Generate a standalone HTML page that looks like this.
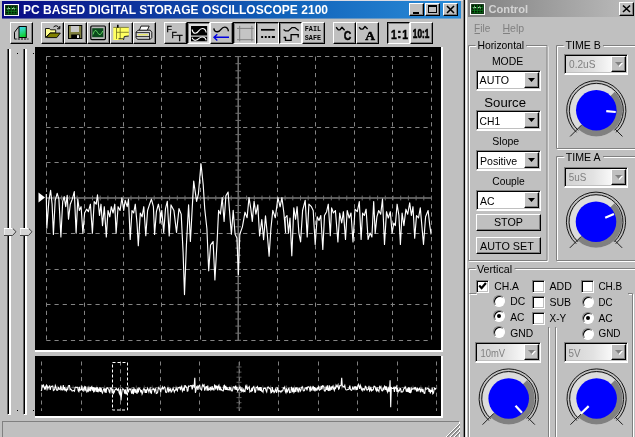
<!DOCTYPE html><html><head><meta charset="utf-8"><title>PC BASED DIGITAL STORAGE OSCILLOSCOPE 2100</title><style>
*{box-sizing:border-box;margin:0;padding:0}
html,body{width:635px;height:437px;overflow:hidden;background:#c0c0c0}
body{position:relative;font-family:"Liberation Sans",sans-serif;font-size:11px;color:#000}
.a{position:absolute}
.t{position:absolute;white-space:nowrap;line-height:1;will-change:transform}
svg{will-change:transform}
.btn{position:absolute;background:#c0c0c0;border:1px solid;border-color:#fff #000 #000 #fff;box-shadow:inset -1px -1px 0 #808080}
.btn.dn{border-color:#000 #fff #fff #000;box-shadow:inset 1px 1px 0 #808080;background:#d8d8d8}
.tb{width:23px;height:23px;top:22px}
.tb svg{position:absolute;left:0;top:0}
.sunk{position:absolute;border:1px solid;border-width:1px 1px 2px 1px;border-color:#808080 #fff #fff #808080;box-shadow:inset 1px 1px 0 #000, inset -1px -1px 0 #c0c0c0;background:#fff}
.grp{position:absolute;border:1px solid #808080;box-shadow:1px 1px 0 #fff, inset 1px 1px 0 #fff}
.lbl{position:absolute;background:#c0c0c0;white-space:nowrap;line-height:1;padding:0 2px}
.cb{position:absolute;width:13px;height:13px;border:1px solid;border-color:#808080 #fff #fff #808080;box-shadow:inset 1px 1px 0 #000, inset -1px -1px 0 #c0c0c0;background:#fff}
.rd{position:absolute;width:12px;height:12px;border-radius:50%;background:#fff;border:1px solid;border-color:#808080 #fff #fff #808080;box-shadow:inset 1px 1px 0 #000}
.rd.on:after{content:"";position:absolute;left:3px;top:3px;width:4px;height:4px;border-radius:50%;background:#000}
.dd{position:absolute;right:1px;top:1px;bottom:1px;width:15px;background:#c0c0c0;border:1px solid;border-color:#fff #000 #000 #fff;box-shadow:inset -1px -1px 0 #808080}
.dd:after{content:"";position:absolute;left:3px;top:5px;width:7px;height:4px;background:#000;clip-path:polygon(0 0,100% 0,50% 100%)}
.dis .dd:after{background:#808080}
.dis{color:#808080;background:linear-gradient(to right,#d2d2d2 0%,#e2e2e2 45%,#fcfcfc 80%) !important}
.dis .dd:before{content:"";position:absolute;left:4px;top:6px;width:7px;height:4px;background:#fff;clip-path:polygon(0 0,100% 0,50% 100%)}
.ct{position:absolute;left:4px;top:4px;line-height:1;white-space:nowrap}
</style></head><body>
<div class="a" style="left:0;top:0;width:465px;height:1px;background:#dcdce4"></div>
<div class="a" style="left:2px;top:1px;width:459px;height:17px;background:linear-gradient(to right,#0a0a84 0%,#1060b8 60%,#2a8cd8 100%)"></div>
<div class="a" style="left:2px;top:18px;width:459px;height:1px;opacity:.55;background:linear-gradient(to right,#0a0a84 0%,#1060b8 60%,#2a8cd8 100%)"></div>
<svg class="a" style="left:4px;top:4px" width="15" height="12.200" viewBox="0 0 16 13" preserveAspectRatio="none"><rect x="0.600" y="0.600" width="14.800" height="11.800" fill="#000" stroke="#fff" stroke-width="1.200"/><rect x="1.800" y="1.800" width="12.400" height="9.400" fill="#0c7a1c"/><rect x="2.2" y="2.2" width="2.100" height="2" fill="#001800"/><rect x="5.2" y="2.2" width="2.100" height="2" fill="#001800"/><rect x="8.2" y="2.2" width="2.100" height="2" fill="#001800"/><rect x="11.2" y="2.2" width="2.100" height="2" fill="#001800"/><rect x="2.2" y="5.2" width="2.100" height="2" fill="#001800"/><rect x="5.2" y="5.2" width="2.100" height="2" fill="#001800"/><rect x="8.2" y="5.2" width="2.100" height="2" fill="#001800"/><rect x="11.2" y="5.2" width="2.100" height="2" fill="#001800"/><rect x="2.2" y="8.2" width="2.100" height="2" fill="#001800"/><rect x="5.2" y="8.2" width="2.100" height="2" fill="#001800"/><rect x="8.2" y="8.2" width="2.100" height="2" fill="#001800"/><rect x="11.2" y="8.2" width="2.100" height="2" fill="#001800"/><path d="M3.500 5.500q1.500 -2.500 3 0M8.500 5.500q1.500 -2.500 3 0" stroke="#e8ffe8" stroke-width="1" fill="none"/></svg>
<div class="t" style="left:23px;top:4px;font-weight:bold;font-size:12px;color:#fff;letter-spacing:0.04px">PC BASED DIGITAL STORAGE OSCILLOSCOPE 2100</div>
<div class="btn" style="left:409px;top:3px;width:15px;height:13px"><div class="a" style="left:3px;top:8px;width:6px;height:2px;background:#000"></div></div>
<div class="btn" style="left:425px;top:3px;width:15px;height:13px"><div class="a" style="left:2px;top:1px;width:9px;height:8px;border:1px solid #000;border-top-width:2px"></div></div>
<div class="btn" style="left:443px;top:3px;width:15px;height:13px"><svg class="a" style="left:0;top:0" width="13" height="11"><path d="M3 2l7 7M10 2l-7 7" stroke="#000" stroke-width="1.6"/></svg></div>
<div class="a" style="left:463px;top:0;width:1px;height:437px;background:#808080"></div>
<div class="a" style="left:464px;top:0;width:1px;height:437px;background:#000"></div>
<div class="btn" style="left:10px;top:22px;width:23px;height:22px"></div>
<div class="btn" style="left:41px;top:22px;width:23px;height:22px"></div>
<div class="btn" style="left:64px;top:22px;width:23px;height:22px"></div>
<div class="btn" style="left:87px;top:22px;width:23px;height:22px"></div>
<div class="btn" style="left:110px;top:22px;width:23px;height:22px"></div>
<div class="btn" style="left:133px;top:22px;width:23px;height:22px"></div>
<div class="btn" style="left:164px;top:22px;width:23px;height:22px"></div>
<div class="btn dn" style="left:187px;top:22px;width:23px;height:22px;background:#dedede"></div>
<div class="btn" style="left:210px;top:22px;width:23px;height:22px"></div>
<div class="btn dn" style="left:233px;top:22px;width:23px;height:22px;background:#c4c4c4"></div>
<div class="btn dn" style="left:256px;top:22px;width:23px;height:22px;background:#c4c4c4"></div>
<div class="btn dn" style="left:279px;top:22px;width:23px;height:22px;background:#c4c4c4"></div>
<div class="btn" style="left:302px;top:22px;width:23px;height:22px"></div>
<div class="btn" style="left:333px;top:22px;width:23px;height:22px"></div>
<div class="btn" style="left:356px;top:22px;width:23px;height:22px"></div>
<div class="btn dn" style="left:387px;top:22px;width:23px;height:22px;background:#cccccc"></div>
<div class="btn" style="left:410px;top:22px;width:23px;height:22px"></div>
<svg class="a" style="left:0;top:20px" width="465" height="27" viewBox="0 20 465 27" font-family="Liberation Sans,sans-serif"><defs><linearGradient id="g1" x1="0" y1="0" x2="0.3" y2="1"><stop offset="0" stop-color="#40d0ff"/><stop offset=".4" stop-color="#30d8b0"/><stop offset="1" stop-color="#10d030"/></linearGradient></defs><rect x="19" y="26.500" width="7.300" height="11" fill="url(#g1)" stroke="#000" stroke-width="1"/><path d="M18.500 27L14.500 32.200V38.800" fill="none" stroke="#000" stroke-width="1"/><path d="M14.500 39H28.500" stroke="#000" stroke-width="1" stroke-dasharray="2.200 1"/><path d="M45.500 37.500V28.500H49.500L50.500 29.800H55.700V33H50Z" fill="#ffff90" stroke="#000" stroke-width=".9"/><path d="M46.300 37.600L49.900 33.100H60.300L56.800 37.600Z" fill="#808000" stroke="#000" stroke-width=".9"/><path d="M53.500 27Q56.500 24.200 59.300 28" fill="none" stroke="#000" stroke-width="1"/><path d="M59.800 26v2.800h-2.800" fill="none" stroke="#000" stroke-width="1"/><rect x="68.500" y="25.500" width="13.300" height="13" fill="#808040" stroke="#000" stroke-width="1"/><rect x="70.800" y="26" width="8.200" height="6" fill="#c8c8c8"/><rect x="71.200" y="34.500" width="8.600" height="4" fill="#000"/><rect x="77" y="35.200" width="2" height="2.800" fill="#e8e8e8"/><rect x="90.800" y="26" width="14.600" height="13.600" rx="1" fill="#b8b8b8" stroke="#000" stroke-width="1.200"/><rect x="92.200" y="28.200" width="11.200" height="9" fill="#0a4a1c"/><path d="M93 34.500Q95 27.500 97.500 32.500T102.800 31" fill="none" stroke="#60d060" stroke-width="1"/><path d="M113.300 27.400H128.800V36L124.300 36.500L123.500 40H113.300Z" fill="#ffff60"/><path d="M116.500 27.500V39M120.200 28V39M116.500 32.300H128.800M113.300 27.400H128.800" stroke="#707020" stroke-width=".8" fill="none"/><path d="M123.500 40L124.300 36.500L128.800 36" stroke="#202020" stroke-width="1" fill="none"/><path d="M117.800 24.800v3" stroke="#000" stroke-width="1.600"/><path d="M118.500 38.800h5" stroke="#303030" stroke-width="1"/><path d="M141 26.100H149.200L147.200 30.600H139.300Z" fill="#fff" stroke="#000" stroke-width=".9"/><path d="M138 30.200H150.200L151.800 32.200V37.500L150.300 39.300H137.500L136.100 37.500V32.200Z" fill="#d8d8d8" stroke="#000" stroke-width=".9"/><path d="M136.100 32.600H149.500M136.100 36.600H149.500M149.500 32.600V39" stroke="#000" stroke-width=".8" fill="none"/><path d="M138 34.700H148" stroke="#e8e860" stroke-width="1.300"/><g stroke="#000" stroke-width=".3" font-size="9.400"><text x="166.400" y="31.800" textLength="5.400" lengthAdjust="spacingAndGlyphs">F</text><text x="171.500" y="37.800" textLength="5.400" lengthAdjust="spacingAndGlyphs">F</text><text x="176.400" y="40.900" textLength="6.200" lengthAdjust="spacingAndGlyphs">T</text></g><rect x="191" y="26" width="16.200" height="15.300" fill="#000"/><path d="M192 29.500Q193 33.500 195.300 33.200C199 33 198.500 28.500 202.400 28.500Q205.500 28.500 206.200 32.500" fill="none" stroke="#fff" stroke-width="1.100"/><path d="M191 36.100H207.200" stroke="#fff" stroke-width="1"/><path d="M192 37.700Q193.300 40.600 195.500 40.300C199 40 198.500 37 202.400 37Q205.300 37 206.200 40.300" fill="none" stroke="#fff" stroke-width="1.100"/><path d="M213.800 28.300Q214.300 31.800 217.300 31.800C221.500 31.800 220.500 27.100 224.600 27.100Q228 27.100 228.400 31.300" fill="none" stroke="#000" stroke-width="1.400"/><path d="M214 37.300H229M217.300 34.200L214 37.300L217.300 40.400" fill="none" stroke="#0000e0" stroke-width="1.400"/><path d="M237 28.400H253.600M237 39.700H253.600M239.700 25.800V41.400M251.900 25.800V41.400" stroke="#808080" stroke-width="1" fill="none"/><path d="M261 29.800H274.800" stroke="#000" stroke-width="1.700"/><path d="M261.200 37H263.100M264.800 37H266.700M268.300 37H270.200M271.800 37H274.900" stroke="#000" stroke-width="1.900"/><path d="M283.600 29.500L285.500 30.900H288.300L292 27.600H294.900L298.700 30.400" fill="none" stroke="#000" stroke-width="1.300"/><path d="M283.600 37.500H285.500V40.300H291.100V34.700H298.200V37.500" fill="none" stroke="#000" stroke-width="1.300"/><text x="304.800" y="31" font-size="7.200" font-weight="bold" font-family="Liberation Mono,monospace" textLength="16.200" lengthAdjust="spacingAndGlyphs">FAIL</text><text x="304.800" y="40" font-size="7.200" font-weight="bold" font-family="Liberation Mono,monospace" textLength="16.200" lengthAdjust="spacingAndGlyphs">SAFE</text><path d="M336.100 27.300L338.300 29.900H339.900L342 27.300L344.600 30.200" fill="none" stroke="#000" stroke-width="1.400" stroke-linejoin="round"/><text x="343.700" y="40.400" font-size="12.800" font-weight="bold" stroke="#000" stroke-width=".5" textLength="7.500" lengthAdjust="spacingAndGlyphs">C</text><path d="M359.100 27.300L360.800 29.100H362.900L365 26.500L367.600 29.100" fill="none" stroke="#000" stroke-width="1.400" stroke-linejoin="round"/><text x="365.200" y="39.700" font-size="13.500" font-weight="bold" font-family="Liberation Serif,serif" stroke="#000" stroke-width=".5">A</text><g font-size="13.500" font-weight="bold" stroke="#000" stroke-width=".5"><text x="391" y="38.900" textLength="5.800" lengthAdjust="spacingAndGlyphs">1</text><text x="397" y="38.300">:</text><text x="402.200" y="38.900" textLength="5.800" lengthAdjust="spacingAndGlyphs">1</text></g><text x="412.800" y="38.100" font-size="13.500" font-weight="bold" textLength="16.500" lengthAdjust="spacingAndGlyphs" stroke="#000" stroke-width=".7">10:1</text></svg>
<div class="a" style="left:7px;top:49px;width:4px;height:366px;border-left:1px solid #606060;border-right:2px solid #fff;border-bottom:1px solid #fff;background:#000"></div>
<div class="a" style="left:23px;top:49px;width:4px;height:366px;border-left:1px solid #606060;border-right:2px solid #fff;border-bottom:1px solid #fff;background:#000"></div>
<div class="a" style="left:17px;top:53px;width:1px;height:1px;background:#000"></div><div class="a" style="left:17px;top:410px;width:1px;height:1px;background:#000"></div>
<div class="a" style="left:33px;top:53px;width:1px;height:1px;background:#000"></div><div class="a" style="left:33px;top:410px;width:1px;height:1px;background:#000"></div>
<svg class="a" style="left:4px;top:228px" width="13" height="9" viewBox="0 0 13 9"><path d="M0 0h8.500l3.500 3.800l-3.500 4.200h-8.500z" fill="#d4d4d4"/><path d="M0 7.500V.5h8.500" stroke="#fff" fill="none"/><path d="M0 7.500h8.500l3.500-3.800l-3.200-3.200" stroke="#404040" fill="none"/></svg>
<svg class="a" style="left:20px;top:228px" width="13" height="9" viewBox="0 0 13 9"><path d="M0 0h8.500l3.500 3.800l-3.500 4.200h-8.500z" fill="#d4d4d4"/><path d="M0 7.500V.5h8.500" stroke="#fff" fill="none"/><path d="M0 7.500h8.500l3.500-3.800l-3.200-3.200" stroke="#404040" fill="none"/></svg>
<div class="a" style="left:35px;top:47px;width:408px;height:305px;background:#fff"></div>
<div class="a" style="left:35px;top:356px;width:408px;height:62px;background:#fff"></div>
<svg class="a" style="left:0;top:0" width="465" height="437" viewBox="0 0 465 437"><rect x="35" y="47" width="406" height="303" fill="#000"/><rect x="35" y="356" width="406" height="60" fill="#000"/><path d="M46.5 56.6V340.3M84.5 56.6V340.3M123.5 56.6V340.3M161.5 56.6V340.3M200.5 56.6V340.3M277.5 56.6V340.3M315.5 56.6V340.3M354.5 56.6V340.3M392.5 56.6V340.3M431.5 56.6V340.3M46.3 56.5H431.5M46.3 92.5H431.5M46.3 127.5H431.5M46.3 162.5H431.5M46.3 233.5H431.5M46.3 269.5H431.5M46.3 304.5H431.5M46.3 340.5H431.5" stroke="#848484" stroke-width="1" stroke-dasharray="4.2 4" fill="none"/><path d="M46.3 198.0H431.5M238.2 56.6V340.3" stroke="#787878" stroke-width="1.4" fill="none"/><path d="M46.3 195.6V200.4M54.0 195.6V200.4M61.7 195.6V200.4M69.4 195.6V200.4M77.1 195.6V200.4M84.8 195.6V200.4M92.5 195.6V200.4M100.2 195.6V200.4M107.9 195.6V200.4M115.6 195.6V200.4M123.3 195.6V200.4M131.0 195.6V200.4M138.7 195.6V200.4M146.5 195.6V200.4M154.2 195.6V200.4M161.9 195.6V200.4M169.6 195.6V200.4M177.3 195.6V200.4M185.0 195.6V200.4M192.7 195.6V200.4M200.4 195.6V200.4M208.1 195.6V200.4M215.8 195.6V200.4M223.5 195.6V200.4M231.2 195.6V200.4M238.9 195.6V200.4M246.6 195.6V200.4M254.3 195.6V200.4M262.0 195.6V200.4M269.7 195.6V200.4M277.4 195.6V200.4M285.1 195.6V200.4M292.8 195.6V200.4M300.5 195.6V200.4M308.2 195.6V200.4M315.9 195.6V200.4M323.6 195.6V200.4M331.3 195.6V200.4M339.1 195.6V200.4M346.8 195.6V200.4M354.5 195.6V200.4M362.2 195.6V200.4M369.9 195.6V200.4M377.6 195.6V200.4M385.3 195.6V200.4M393.0 195.6V200.4M400.7 195.6V200.4M408.4 195.6V200.4M416.1 195.6V200.4M423.8 195.6V200.4M431.5 195.6V200.4M235.4 56.6H241.0M235.4 63.7H241.0M235.4 70.8H241.0M235.4 77.9H241.0M235.4 85.0H241.0M235.4 92.1H241.0M235.4 99.2H241.0M235.4 106.2H241.0M235.4 113.3H241.0M235.4 120.4H241.0M235.4 127.5H241.0M235.4 134.6H241.0M235.4 141.7H241.0M235.4 148.8H241.0M235.4 155.9H241.0M235.4 163.0H241.0M235.4 170.1H241.0M235.4 177.2H241.0M235.4 184.3H241.0M235.4 191.4H241.0M235.4 198.4H241.0M235.4 205.5H241.0M235.4 212.6H241.0M235.4 219.7H241.0M235.4 226.8H241.0M235.4 233.9H241.0M235.4 241.0H241.0M235.4 248.1H241.0M235.4 255.2H241.0M235.4 262.3H241.0M235.4 269.4H241.0M235.4 276.5H241.0M235.4 283.6H241.0M235.4 290.7H241.0M235.4 297.7H241.0M235.4 304.8H241.0M235.4 311.9H241.0M235.4 319.0H241.0M235.4 326.1H241.0M235.4 333.2H241.0M235.4 340.3H241.0" stroke="#707070" stroke-width="1" fill="none"/><polyline points="46.3,194.1 46.8,228.1 48.9,200.4 50.6,190.3 52.1,204.2 53.4,234.4 55.2,200.4 57.2,193.3 58.9,199.1 60.9,236.9 62.7,201.6 64.2,196.6 65.7,206.7 67.2,195.3 68.5,219.3 70.3,204.2 72.3,199.1 74.3,191.6 76.1,233.1 77.8,199.1 79.3,210.5 81.1,206.7 82.9,233.1 84.6,213.0 86.6,209.2 88.4,211.7 90.4,204.2 92.4,233.1 94.2,201.6 96.2,204.2 97.5,194.8 99.5,215.5 101.0,204.2 102.5,225.6 104.3,206.7 106.3,236.9 108.0,210.5 109.8,216.8 111.3,206.7 113.1,213.0 114.8,204.2 116.1,233.1 118.1,206.7 120.1,210.5 121.9,197.9 123.7,210.5 125.2,200.4 127.2,206.7 128.5,199.1 130.2,239.4 132.0,210.5 133.7,213.0 135.3,204.2 137.0,223.0 138.3,245.7 140.3,213.0 142.1,216.8 143.8,206.7 145.8,235.6 147.6,210.5 149.6,204.2 151.4,199.1 153.4,206.7 154.6,234.4 156.4,211.7 158.4,204.2 160.2,213.0 160.0,223.2 161.8,210.4 163.7,232.4 165.5,208.6 167.3,201.3 169.2,236.0 171.0,204.9 173.9,210.4 176.5,232.4 179.0,208.6 181.2,214.1 183.1,252.5 184.5,294.6 186.4,245.2 188.6,204.9 190.4,241.5 192.2,208.6 193.7,181.1 196.6,201.3 198.4,193.9 201.0,163.9 203.2,184.8 204.7,208.6 206.9,228.7 208.7,270.8 210.5,245.2 213.1,241.5 214.9,280.0 217.1,241.5 218.6,210.4 220.4,214.1 222.2,197.6 224.1,221.4 225.9,195.8 228.1,192.1 229.6,212.2 231.4,234.2 233.2,210.4 235.1,234.2 236.9,237.9 238.4,274.5 239.8,234.2 242.4,226.9 245.0,212.2 247.1,217.7 249.0,197.6 250.8,208.6 252.3,221.4 254.1,201.3 255.9,214.1 257.8,204.9 259.6,236.0 261.8,219.6 263.6,239.7 265.5,215.9 267.3,234.2 269.1,256.2 270.9,228.7 272.8,210.4 275.3,217.7 277.9,197.6 280.1,206.8 281.9,197.6 283.8,212.2 285.6,232.4 285.0,218.0 287.0,215.5 288.5,233.1 290.0,218.0 291.8,255.8 293.8,207.9 295.6,219.3 297.1,206.7 298.9,233.1 300.6,241.9 302.6,210.5 305.2,200.4 307.2,236.9 308.9,204.2 311.4,206.7 313.2,210.5 315.2,244.5 317.2,216.8 319.0,220.5 320.8,215.5 322.8,249.5 324.5,215.5 326.6,211.7 328.3,204.2 330.3,235.6 331.6,207.9 333.4,213.0 335.4,210.5 337.9,241.9 339.7,213.0 341.7,223.0 343.4,211.7 345.5,239.4 347.2,210.5 349.2,218.0 351.0,213.0 353.0,241.9 355.0,209.2 357.3,211.7 359.3,201.6 361.1,239.4 362.6,213.0 364.3,215.5 366.1,209.2 368.1,239.4 370.1,233.1 371.9,236.9 373.7,201.6 375.2,233.1 376.9,216.8 378.7,210.5 380.7,214.2 382.5,199.1 384.5,244.5 386.5,211.7 388.3,218.0 390.3,211.7 392.1,233.1 393.8,223.0 395.3,225.6 397.1,204.2 398.9,215.5 400.4,244.5 402.1,213.0 403.9,225.6 405.9,209.2 407.7,214.2 409.7,202.9 411.4,215.5 413.0,206.7 414.7,238.2 416.5,215.5 418.5,218.0 420.3,207.9 423.5,244.5 425.6,216.8 428.1,210.5 429.8,225.6 431.1,234.4" fill="none" stroke="#fff" stroke-width="1.15" stroke-linejoin="round"/><path d="M38.500 192.500l6.500 5l-6.500 5z" fill="#fff"/><path d="M41.5 361.500V411M81.5 361.500V411M120.5 361.500V411M160.5 361.500V411M199.5 361.500V411M239.5 361.500V411M278.5 361.500V411M318.5 361.500V411M357.5 361.500V411M397.5 361.500V411M436.5 361.500V411" stroke="#808080" stroke-width="1" stroke-dasharray="4 3.800" fill="none"/><path d="M41.500 387.500H437" stroke="#606060" stroke-width="1" stroke-dasharray="3 3" fill="none"/><path d="M41.5 385.500V389.500M49.4 385.500V389.500M57.3 385.500V389.500M65.2 385.500V389.500M73.1 385.500V389.500M81.0 385.500V389.500M88.9 385.500V389.500M96.8 385.500V389.500M104.7 385.500V389.500M112.6 385.500V389.500M120.5 385.500V389.500M128.4 385.500V389.500M136.3 385.500V389.500M144.3 385.500V389.500M152.2 385.500V389.500M160.1 385.500V389.500M168.0 385.500V389.500M175.9 385.500V389.500M183.8 385.500V389.500M191.7 385.500V389.500M199.6 385.500V389.500M207.5 385.500V389.500M215.4 385.500V389.500M223.3 385.500V389.500M231.2 385.500V389.500M239.1 385.500V389.500M247.0 385.500V389.500M254.9 385.500V389.500M262.8 385.500V389.500M270.7 385.500V389.500M278.6 385.500V389.500M286.5 385.500V389.500M294.4 385.500V389.500M302.3 385.500V389.500M310.2 385.500V389.500M318.1 385.500V389.500M326.0 385.500V389.500M333.9 385.500V389.500M341.9 385.500V389.500M349.8 385.500V389.500M357.7 385.500V389.500M365.6 385.500V389.500M373.5 385.500V389.500M381.4 385.500V389.500M389.3 385.500V389.500M397.2 385.500V389.500M405.1 385.500V389.500M413.0 385.500V389.500M420.9 385.500V389.500M428.8 385.500V389.500M436.7 385.500V389.500" stroke="#585858" stroke-width=".8" fill="none"/><path d="M239 362V411M236.500 367.0H241.500M236.500 372.1H241.500M236.500 377.2H241.500M236.500 382.3H241.500M236.500 387.4H241.500M236.500 392.5H241.500M236.500 397.6H241.500M236.500 402.7H241.500M236.500 407.8H241.500" stroke="#707070" stroke-width=".8" fill="none"/><polyline points="41.0,390.9 41.6,390.2 42.2,385.4 42.9,386.4 43.5,385.2 44.1,387.1 44.7,389.7 45.3,387.0 46.0,388.9 46.6,385.1 47.2,385.9 47.8,388.9 48.4,387.1 49.1,386.6 49.7,386.0 50.3,390.0 50.9,387.0 51.5,386.4 52.2,386.0 52.8,386.1 53.4,390.5 54.0,390.1 54.6,389.6 55.3,385.5 55.9,387.0 56.5,390.0 57.1,390.4 57.7,390.1 58.4,386.9 59.0,389.2 59.6,389.1 60.2,389.7 60.8,385.5 61.5,389.5 62.1,390.1 62.7,389.0 63.3,385.1 63.9,390.3 64.6,387.1 65.2,390.2 65.8,389.4 66.4,390.8 67.0,388.8 67.7,389.6 68.3,386.1 68.9,385.5 69.5,385.6 70.1,389.7 70.8,389.0 71.4,389.8 72.0,390.9 72.6,390.9 73.2,390.6 73.9,390.6 74.5,391.2 75.1,387.4 75.7,387.1 76.3,387.6 77.0,387.1 77.6,387.4 78.2,390.7 78.8,391.5 79.4,386.8 80.1,390.3 80.7,389.7 81.3,389.7 81.9,385.8 82.5,390.0 83.2,391.0 83.8,388.1 84.4,387.0 85.0,391.2 85.6,386.3 86.3,390.2 86.9,392.0 87.5,391.0 88.1,386.5 88.7,391.1 89.4,390.3 90.0,386.9 90.6,391.2 91.2,387.5 91.8,386.6 92.5,390.6 93.1,387.1 93.7,392.5 94.3,387.3 94.9,391.6 95.6,388.1 96.2,387.8 96.8,392.0 97.4,387.3 98.0,392.3 98.7,388.7 99.3,391.5 99.9,387.0 100.5,391.9 101.1,387.8 101.8,391.9 102.4,393.1 103.0,391.2 103.6,389.0 104.2,388.8 104.9,392.5 105.5,388.6 106.1,393.0 106.7,387.9 107.3,387.7 108.0,388.7 108.6,388.9 109.2,391.7 109.8,392.6 110.4,388.4 111.1,387.8 111.7,389.7 112.3,393.5 112.9,388.8 113.5,393.3 114.2,392.2 114.8,390.3 115.4,389.2 116.0,389.4 116.6,388.6 117.3,390.4 117.9,389.9 118.5,388.9 119.1,392.8 119.7,394.1 120.4,388.7 121.0,400.5 121.6,394.1 122.2,389.5 122.8,388.7 123.5,389.3 124.1,390.3 124.7,393.6 125.3,389.4 125.9,393.7 126.6,393.9 127.2,388.6 127.8,390.0 128.4,392.3 129.0,389.4 129.7,388.9 130.3,389.6 130.9,389.0 131.5,393.2 132.1,393.2 132.8,388.9 133.4,394.1 134.0,388.6 134.6,389.5 135.2,393.0 135.9,389.0 136.5,392.2 137.1,393.7 137.7,388.3 138.3,392.3 139.0,388.3 139.6,388.7 140.2,389.5 140.8,392.3 141.4,390.0 142.1,394.1 142.7,392.7 143.3,389.5 143.9,388.7 144.5,389.5 145.2,392.8 145.8,389.4 146.4,393.0 147.0,390.0 147.6,388.1 148.3,390.0 148.9,391.9 149.5,389.6 150.1,388.4 150.7,392.6 151.4,393.2 152.0,389.4 152.6,389.1 153.2,389.4 153.8,388.5 154.5,391.6 155.1,389.6 155.7,388.7 156.3,393.5 156.9,393.3 157.6,392.6 158.2,388.4 158.8,387.4 159.4,388.9 160.0,389.0 160.7,392.3 161.3,388.7 161.9,388.7 162.5,387.0 163.1,389.1 163.8,388.0 164.4,387.0 165.0,387.6 165.6,392.0 166.2,392.6 166.9,392.0 167.5,388.0 168.1,387.9 168.7,392.5 169.3,388.6 170.0,391.2 170.6,388.4 171.2,392.0 171.8,391.4 172.4,390.1 173.1,388.0 173.7,389.9 174.3,392.0 174.9,390.3 175.5,390.2 176.2,388.1 176.8,389.9 177.4,390.8 178.0,387.5 178.6,387.8 179.3,387.6 179.9,387.0 180.5,390.1 181.1,387.6 181.7,386.3 182.4,391.0 183.0,389.7 183.6,387.6 184.2,390.9 184.8,385.6 185.5,385.8 186.1,387.3 186.7,387.2 187.3,391.2 187.9,390.9 188.6,386.0 189.2,386.3 189.8,386.3 190.4,385.6 191.0,385.8 191.7,385.6 192.3,389.3 192.9,385.3 193.5,385.5 194.1,386.5 194.8,377.8 195.4,392.8 196.0,390.2 196.6,386.7 197.2,386.1 197.9,389.8 198.5,386.8 199.1,385.7 199.7,385.2 200.3,388.9 201.0,389.3 201.6,390.0 202.2,386.1 202.8,384.7 203.4,386.1 204.1,385.0 204.7,390.6 205.3,388.9 205.9,386.7 206.5,386.6 207.2,390.6 207.8,385.6 208.4,390.5 209.0,389.0 209.6,389.4 210.3,386.9 210.9,390.1 211.5,389.3 212.1,386.1 212.7,389.3 213.4,388.6 214.0,390.5 214.6,385.0 215.2,385.5 215.8,389.3 216.5,386.2 217.1,386.3 217.7,390.4 218.3,386.5 218.9,385.3 219.6,390.2 220.2,386.7 220.8,389.8 221.4,389.3 222.0,390.6 222.7,390.8 223.3,390.9 223.9,385.7 224.5,385.3 225.1,389.9 225.8,385.9 226.4,390.0 227.0,387.0 227.6,389.7 228.2,389.6 228.9,389.9 229.5,386.8 230.1,389.3 230.7,387.3 231.3,390.3 232.0,391.1 232.6,390.1 233.2,387.0 233.8,386.8 234.4,386.9 235.1,389.7 235.7,385.6 236.3,390.0 236.9,386.8 237.5,390.9 238.2,389.9 238.8,389.5 239.4,387.5 240.0,386.9 240.6,390.3 241.3,391.2 241.9,387.5 242.5,391.0 243.1,391.6 243.7,389.5 244.4,391.6 245.0,391.7 245.6,386.3 246.2,387.7 246.8,386.0 247.5,389.9 248.1,388.1 248.7,387.6 249.3,386.7 249.9,391.9 250.6,391.0 251.2,391.4 251.8,388.1 252.4,391.1 253.0,387.5 253.7,386.6 254.3,388.4 254.9,392.2 255.5,392.2 256.1,387.5 256.8,387.3 257.4,386.5 258.0,390.3 258.6,387.5 259.2,390.4 259.9,387.2 260.5,390.8 261.1,387.2 261.7,391.2 262.3,390.9 263.0,392.1 263.6,388.4 264.2,388.2 264.8,388.4 265.4,388.4 266.1,390.8 266.7,392.0 267.3,388.0 267.9,387.0 268.5,387.1 269.2,388.7 269.8,388.3 270.4,388.8 271.0,392.8 271.6,392.4 272.3,387.1 272.9,391.2 273.5,390.8 274.1,392.6 274.7,391.7 275.4,389.1 276.0,390.9 276.6,392.8 277.2,387.8 277.8,388.2 278.5,392.5 279.1,390.8 279.7,391.1 280.3,391.1 280.9,392.2 281.6,390.7 282.2,391.1 282.8,390.7 283.4,388.0 284.0,388.4 284.7,387.0 285.3,391.3 285.9,392.6 286.5,388.3 287.1,392.5 287.8,390.5 288.4,388.8 289.0,388.6 289.6,392.6 290.2,392.2 290.9,392.2 291.5,386.8 292.1,388.8 292.7,392.2 293.3,387.5 294.0,392.3 294.6,391.2 295.2,387.7 295.8,392.0 296.4,387.9 297.1,387.7 297.7,390.7 298.3,392.3 298.9,388.1 299.5,388.2 300.2,391.4 300.8,390.6 301.4,387.7 302.0,387.0 302.6,386.9 303.3,390.8 303.9,390.9 304.5,390.5 305.1,388.0 305.7,388.1 306.4,387.7 307.0,390.5 307.6,387.2 308.2,386.9 308.8,386.8 309.5,388.0 310.1,391.7 310.7,386.3 311.3,389.8 311.9,390.2 312.6,387.7 313.2,386.0 313.8,390.7 314.4,387.0 315.0,391.3 315.7,387.7 316.3,390.0 316.9,390.2 317.5,387.4 318.1,389.5 318.8,386.0 319.4,390.2 320.0,389.7 320.6,389.4 321.2,385.9 321.9,389.3 322.5,385.8 323.1,386.1 323.7,386.1 324.3,390.6 325.0,391.2 325.6,389.9 326.2,386.7 326.8,389.9 327.4,385.4 328.1,390.3 328.7,390.5 329.3,385.2 329.9,390.8 330.5,389.0 331.2,386.3 331.8,389.8 332.4,386.9 333.0,385.9 333.6,388.9 334.3,390.4 334.9,386.8 335.5,389.1 336.1,385.1 336.7,386.2 337.4,386.4 338.0,384.9 338.6,389.3 339.2,388.8 339.8,385.6 340.5,385.7 341.1,385.2 341.7,377.8 342.3,386.1 342.9,386.1 343.6,386.6 344.2,386.9 344.8,385.5 345.4,388.8 346.0,389.7 346.7,390.0 347.3,389.8 347.9,389.4 348.5,389.5 349.1,388.9 349.8,385.5 350.4,389.5 351.0,390.1 351.6,390.3 352.2,389.3 352.9,386.5 353.5,389.2 354.1,389.5 354.7,386.7 355.3,386.6 356.0,390.1 356.6,386.6 357.2,389.8 357.8,386.7 358.4,384.5 359.1,386.3 359.7,388.9 360.3,385.2 360.9,386.6 361.5,389.7 362.2,388.8 362.8,390.5 363.4,388.8 364.0,389.0 364.6,389.9 365.3,386.3 365.9,386.6 366.5,389.0 367.1,390.2 367.7,389.1 368.4,389.1 369.0,385.8 369.6,391.0 370.2,390.1 370.8,386.8 371.5,390.6 372.1,389.6 372.7,390.3 373.3,389.8 373.9,386.6 374.6,386.2 375.2,387.0 375.8,389.9 376.4,390.9 377.0,387.2 377.7,390.7 378.3,390.3 378.9,391.4 379.5,386.8 380.1,387.9 380.8,386.7 381.4,389.8 382.0,390.8 382.6,390.9 383.2,387.6 383.9,390.1 384.5,386.1 385.1,386.6 385.7,390.0 386.3,386.3 387.0,390.8 387.6,392.0 388.2,386.9 388.8,391.3 389.4,391.3 390.1,380.2 390.7,407.2 391.3,387.6 391.9,388.1 392.5,388.5 393.2,388.2 393.8,387.4 394.4,392.0 395.0,387.5 395.6,388.0 396.3,386.5 396.9,391.8 397.5,387.9 398.1,392.0 398.7,390.5 399.4,390.8 400.0,388.2 400.6,388.6 401.2,392.0 401.8,391.9 402.5,392.0 403.1,391.2 403.7,388.8 404.3,388.6 404.9,387.1 405.6,386.9 406.2,391.1 406.8,391.4 407.4,388.3 408.0,391.8 408.7,387.3 409.3,392.9 409.9,387.9 410.5,392.6 411.1,392.2 411.8,388.0 412.4,389.0 413.0,389.1 413.6,388.6 414.2,387.8 414.9,389.3 415.5,387.9 416.1,389.3 416.7,391.5 417.3,387.5 418.0,391.3 418.6,389.1 419.2,389.5 419.8,387.8 420.4,392.3 421.1,389.4 421.7,389.0 422.3,392.2 422.9,388.9 423.5,391.4 424.2,393.3 424.8,393.2 425.4,388.1 426.0,388.9 426.6,389.1 427.3,388.7 427.9,388.3 428.5,388.6 429.1,391.9 429.7,388.8 430.4,393.3 431.0,390.0 431.6,391.8 432.2,387.9 432.8,393.8 433.5,393.0 434.1,389.5 434.7,388.1 435.3,389.1 435.9,388.1" fill="none" stroke="#fff" stroke-width="1.1"/><rect x="112.500" y="362.500" width="15" height="47.500" fill="none" stroke="#fff" stroke-width="1" stroke-dasharray="3 2"/></svg>
<div class="a" style="left:2px;top:421px;width:458px;height:20px;border:1px solid;border-color:#808080 #fff #fff #808080"></div>
<svg class="a" style="left:446px;top:423px" width="14" height="14"><path d="M1 14L14 1M5 14L14 5M9 14L14 9" stroke="#808080" stroke-width="1.6"/><path d="M0 14L14 0M4 14L14 4M8 14L14 8" stroke="#fff" stroke-width="1"/></svg>
<div class="a" style="left:465px;top:0;width:1px;height:437px;background:#dcdcdc"></div>
<div class="a" style="left:466px;top:0;width:1px;height:437px;background:#fff"></div>
<div class="a" style="left:468px;top:0;width:167px;height:17px;background:linear-gradient(to right,#808080,#bcbcbc)"></div>
<svg class="a" style="left:470px;top:3px" width="15" height="12.200" viewBox="0 0 16 13" preserveAspectRatio="none"><rect x="0.600" y="0.600" width="14.800" height="11.800" fill="#000" stroke="#fff" stroke-width="1.200"/><rect x="1.800" y="1.800" width="12.400" height="9.400" fill="#0c7a1c"/><rect x="2.2" y="2.2" width="2.100" height="2" fill="#001800"/><rect x="5.2" y="2.2" width="2.100" height="2" fill="#001800"/><rect x="8.2" y="2.2" width="2.100" height="2" fill="#001800"/><rect x="11.2" y="2.2" width="2.100" height="2" fill="#001800"/><rect x="2.2" y="5.2" width="2.100" height="2" fill="#001800"/><rect x="5.2" y="5.2" width="2.100" height="2" fill="#001800"/><rect x="8.2" y="5.2" width="2.100" height="2" fill="#001800"/><rect x="11.2" y="5.2" width="2.100" height="2" fill="#001800"/><rect x="2.2" y="8.2" width="2.100" height="2" fill="#001800"/><rect x="5.2" y="8.2" width="2.100" height="2" fill="#001800"/><rect x="8.2" y="8.2" width="2.100" height="2" fill="#001800"/><rect x="11.2" y="8.2" width="2.100" height="2" fill="#001800"/><path d="M3.500 5.500q1.500 -2.500 3 0M8.500 5.500q1.500 -2.500 3 0" stroke="#e8ffe8" stroke-width="1" fill="none"/></svg>
<div class="btn" style="left:619px;top:2px;width:15px;height:14px"><svg class="a" style="left:0;top:0" width="13" height="12"><path d="M3 2.500l7 6.500M10 2.500l-7 6.500" stroke="#000" stroke-width="1.600"/></svg></div>
<svg class="a" style="left:465px;top:0" width="170" height="437" viewBox="465 0 170 437"><path d="M475.500 45.500H468.500V260.500H547V45.500H526" transform="translate(1,1)" stroke="#fff" fill="none"/><path d="M475.500 45.500H468.500V260.500H547V45.500H526" stroke="#808080" fill="none"/><path d="M563.500 45.500H556.500V148.500H640V45.500H603" transform="translate(1,1)" stroke="#fff" fill="none"/><path d="M563.500 45.500H556.500V148.500H640V45.500H603" stroke="#808080" fill="none"/><path d="M563.500 156.500H556.500V260.500H640V156.500H603" transform="translate(1,1)" stroke="#fff" fill="none"/><path d="M563.500 156.500H556.500V260.500H640V156.500H603" stroke="#808080" fill="none"/><path d="M475.500 268.500H468.500V445H640V268.500H514.500" transform="translate(1,1)" stroke="#fff" fill="none"/><path d="M475.500 268.500H468.500V445H640V268.500H514.500" stroke="#808080" fill="none"/><path d="M476 293.500H469.500" transform="translate(1,1)" stroke="#fff" fill="none"/><path d="M476 293.500H469.500" stroke="#808080" fill="none"/><path d="M548.500 327V445" transform="translate(1,1)" stroke="#fff" fill="none"/><path d="M548.500 327V445" stroke="#808080" fill="none"/><path d="M555.500 327V445" transform="translate(1,1)" stroke="#fff" fill="none"/><path d="M555.500 327V445" stroke="#808080" fill="none"/><path d="M628 293.500H632.500V445" transform="translate(1,1)" stroke="#fff" fill="none"/><path d="M628 293.500H632.500V445" stroke="#808080" fill="none"/></svg>
<div class="sunk" style="left:476px;top:70px;width:65px;height:21px"><span class="ct" style="font-size:11px"></span><div class="dd"></div></div>
<div class="sunk" style="left:476px;top:110px;width:65px;height:21px"><span class="ct" style="font-size:11px"></span><div class="dd"></div></div>
<div class="sunk" style="left:476px;top:150px;width:65px;height:21px"><span class="ct" style="font-size:11px"></span><div class="dd"></div></div>
<div class="sunk" style="left:476px;top:190px;width:65px;height:21px"><span class="ct" style="font-size:11px"></span><div class="dd"></div></div>
<div class="btn" style="left:476px;top:214px;width:65px;height:17px"></div>
<div class="btn" style="left:476px;top:237px;width:65px;height:17px"></div>
<div class="sunk dis" style="left:564px;top:54px;width:64px;height:21px"><span class="ct" style="font-size:11px"></span><div class="dd"></div></div>
<div class="sunk dis" style="left:564px;top:167px;width:64px;height:21px"><span class="ct" style="font-size:11px"></span><div class="dd"></div></div>
<div class="sunk dis" style="left:475px;top:342px;width:66px;height:21px"><span class="ct" style="font-size:11px"></span><div class="dd"></div></div>
<div class="sunk dis" style="left:564px;top:342px;width:64px;height:21px"><span class="ct" style="font-size:11px"></span><div class="dd"></div></div>
<div class="cb" style="left:476px;top:280px"><svg class="a" style="left:-1px;top:-1px" width="13" height="13"><path d="M3.200 5.600l2.400 2.600l4.300-5.200" stroke="#000" stroke-width="2.200" fill="none"/></svg></div>
<div class="cb" style="left:532px;top:280px"></div>
<div class="cb" style="left:581px;top:280px"></div>
<div class="cb" style="left:532px;top:296px"></div>
<div class="cb" style="left:532px;top:312px"></div>
<div class="rd" style="left:493px;top:295px"></div>
<div class="rd on" style="left:493px;top:310px"></div>
<div class="rd" style="left:493px;top:326px"></div>
<div class="rd" style="left:581.5px;top:296px"></div>
<div class="rd on" style="left:581.5px;top:311.5px"></div>
<div class="rd" style="left:581.5px;top:327.5px"></div>
<svg class="a" style="left:465px;top:0" width="170" height="437" viewBox="465 0 170 437" font-family="Liberation Sans,sans-serif" font-size="11.500"><text x="488.5" y="12.6" font-size="11.5" fill="#d4d4d4" textLength="39.6" lengthAdjust="spacingAndGlyphs" font-weight="bold">Control</text><text x="474.1" y="31.5" font-size="11" fill="#808080" textLength="16.2" lengthAdjust="spacingAndGlyphs">File</text><text x="502.4" y="31.5" font-size="11" fill="#808080" textLength="21.7" lengthAdjust="spacingAndGlyphs">Help</text><path d="M474.500 33.500H480M503 33.500H510" stroke="#808080"/><text x="477.4" y="48.5" font-size="11.5" fill="#000" textLength="46.7" lengthAdjust="spacingAndGlyphs">Horizontal</text><text x="491.9" y="64.9" font-size="11.5" fill="#000" textLength="31.4" lengthAdjust="spacingAndGlyphs">MODE</text><text x="479.6" y="84.4" font-size="11.5" fill="#000" textLength="29.4" lengthAdjust="spacingAndGlyphs">AUTO</text><text x="484.3" y="106.9" font-size="13.3" fill="#000" textLength="41.7" lengthAdjust="spacingAndGlyphs">Source</text><text x="479.6" y="124.8" font-size="11.5" fill="#000" textLength="20.6" lengthAdjust="spacingAndGlyphs">CH1</text><text x="492.3" y="144.8" font-size="11.5" fill="#000" textLength="26.9" lengthAdjust="spacingAndGlyphs">Slope</text><text x="480.0" y="165.0" font-size="11.5" fill="#000" textLength="37.1" lengthAdjust="spacingAndGlyphs">Positive</text><text x="492.3" y="185.0" font-size="11.5" fill="#000" textLength="32.5" lengthAdjust="spacingAndGlyphs">Couple</text><text x="480.0" y="205.2" font-size="11.5" fill="#000" textLength="14.5" lengthAdjust="spacingAndGlyphs">AC</text><text x="493.9" y="226.0" font-size="11.5" fill="#000" textLength="29.0" lengthAdjust="spacingAndGlyphs">STOP</text><text x="480.0" y="250.0" font-size="11.5" fill="#000" textLength="53.8" lengthAdjust="spacingAndGlyphs">AUTO SET</text><text x="565.5" y="48.5" font-size="11.5" fill="#000" textLength="35.4" lengthAdjust="spacingAndGlyphs">TIME B</text><text x="569.0" y="68.0" font-size="11.5" fill="#808080" textLength="26.5" lengthAdjust="spacingAndGlyphs">0.2uS</text><text x="565.8" y="160.8" font-size="11.5" fill="#000" textLength="34.8" lengthAdjust="spacingAndGlyphs">TIME A</text><text x="568.8" y="181.0" font-size="11.5" fill="#808080" textLength="17.6" lengthAdjust="spacingAndGlyphs">5uS</text><text x="477.1" y="272.6" font-size="11.5" fill="#000" textLength="35.0" lengthAdjust="spacingAndGlyphs">Vertical</text><text x="494.2" y="290.0" font-size="11.5" fill="#000" textLength="24.8" lengthAdjust="spacingAndGlyphs">CH.A</text><text x="549.5" y="290.0" font-size="11.5" fill="#000" textLength="22.3" lengthAdjust="spacingAndGlyphs">ADD</text><text x="598.4" y="290.0" font-size="11.5" fill="#000" textLength="23.9" lengthAdjust="spacingAndGlyphs">CH.B</text><text x="510.2" y="304.8" font-size="11.5" fill="#000" textLength="15.0" lengthAdjust="spacingAndGlyphs">DC</text><text x="549.5" y="305.8" font-size="11.5" fill="#000" textLength="21.6" lengthAdjust="spacingAndGlyphs">SUB</text><text x="598.4" y="305.8" font-size="11.5" fill="#000" textLength="14.0" lengthAdjust="spacingAndGlyphs">DC</text><text x="510.2" y="320.6" font-size="11.5" fill="#000" textLength="14.2" lengthAdjust="spacingAndGlyphs">AC</text><text x="549.5" y="321.8" font-size="11.5" fill="#000" textLength="16.6" lengthAdjust="spacingAndGlyphs">X-Y</text><text x="598.4" y="322.0" font-size="11.5" fill="#000" textLength="14.2" lengthAdjust="spacingAndGlyphs">AC</text><text x="510.2" y="336.7" font-size="11.5" fill="#000" textLength="22.9" lengthAdjust="spacingAndGlyphs">GND</text><text x="598.4" y="337.4" font-size="11.5" fill="#000" textLength="22.1" lengthAdjust="spacingAndGlyphs">GND</text><text x="480.5" y="357.2" font-size="11.5" fill="#808080" textLength="24.6" lengthAdjust="spacingAndGlyphs">10mV</text><text x="568.5" y="357.2" font-size="11.5" fill="#808080" textLength="12.0" lengthAdjust="spacingAndGlyphs">5V</text></svg>
<svg class="a" style="left:465px;top:0" width="170" height="437" viewBox="465 0 170 437"><circle cx="596.3" cy="110.3" r="26.1" fill="#dcdcdc"/><path d="M614.76,91.84 A26.1,26.1 0 0 1 577.84,128.76 Z" fill="#808080"/><path d="M576.49,132.30 A29.6,29.6 0 1 1 616.11,132.30" fill="none" stroke="#000" stroke-width=".9"/><path d="M578.23,130.36 A27.0,27.0 0 1 1 614.37,130.36" fill="none" stroke="#000" stroke-width=".9"/><line x1="581.45" y1="125.15" x2="570.14" y2="136.46" stroke="#202020" stroke-width="1"/><line x1="615.39" y1="129.39" x2="622.46" y2="136.46" stroke="#202020" stroke-width="1"/><circle cx="596.3" cy="110.3" r="20.3" fill="#0000ff"/><line x1="606.26" y1="111.17" x2="615.73" y2="112.00" stroke="#fff" stroke-width="2.2"/><circle cx="596" cy="221.7" r="26.1" fill="#dcdcdc"/><path d="M614.46,203.24 A26.1,26.1 0 0 1 577.54,240.16 Z" fill="#808080"/><path d="M576.19,243.70 A29.6,29.6 0 1 1 615.81,243.70" fill="none" stroke="#000" stroke-width=".9"/><path d="M577.93,241.76 A27.0,27.0 0 1 1 614.07,241.76" fill="none" stroke="#000" stroke-width=".9"/><line x1="581.15" y1="236.55" x2="569.84" y2="247.86" stroke="#202020" stroke-width="1"/><line x1="615.09" y1="240.79" x2="622.16" y2="247.86" stroke="#202020" stroke-width="1"/><circle cx="596" cy="221.7" r="20.3" fill="#0000ff"/><line x1="605.21" y1="217.79" x2="613.95" y2="214.08" stroke="#fff" stroke-width="2.2"/><circle cx="508.7" cy="398.5" r="26.1" fill="#dcdcdc"/><path d="M527.16,380.04 A26.1,26.1 0 0 1 490.24,416.96 Z" fill="#808080"/><path d="M488.89,420.50 A29.6,29.6 0 1 1 528.51,420.50" fill="none" stroke="#000" stroke-width=".9"/><path d="M490.63,418.56 A27.0,27.0 0 1 1 526.77,418.56" fill="none" stroke="#000" stroke-width=".9"/><line x1="493.85" y1="413.35" x2="482.54" y2="424.66" stroke="#202020" stroke-width="1"/><line x1="527.79" y1="417.59" x2="534.86" y2="424.66" stroke="#202020" stroke-width="1"/><circle cx="508.7" cy="398.5" r="20.3" fill="#0000ff"/><line x1="515.52" y1="405.81" x2="522.00" y2="412.76" stroke="#fff" stroke-width="2.2"/><circle cx="596.6" cy="398.5" r="26.1" fill="#dcdcdc"/><path d="M615.06,380.04 A26.1,26.1 0 0 1 578.14,416.96 Z" fill="#808080"/><path d="M576.79,420.50 A29.6,29.6 0 1 1 616.41,420.50" fill="none" stroke="#000" stroke-width=".9"/><path d="M578.53,418.56 A27.0,27.0 0 1 1 614.67,418.56" fill="none" stroke="#000" stroke-width=".9"/><line x1="581.75" y1="413.35" x2="570.44" y2="424.66" stroke="#202020" stroke-width="1"/><line x1="615.69" y1="417.59" x2="622.76" y2="424.66" stroke="#202020" stroke-width="1"/><circle cx="596.6" cy="398.5" r="20.3" fill="#0000ff"/><line x1="588.69" y1="406.14" x2="580.77" y2="413.78" stroke="#fff" stroke-width="2.2"/></svg>
</body></html>
